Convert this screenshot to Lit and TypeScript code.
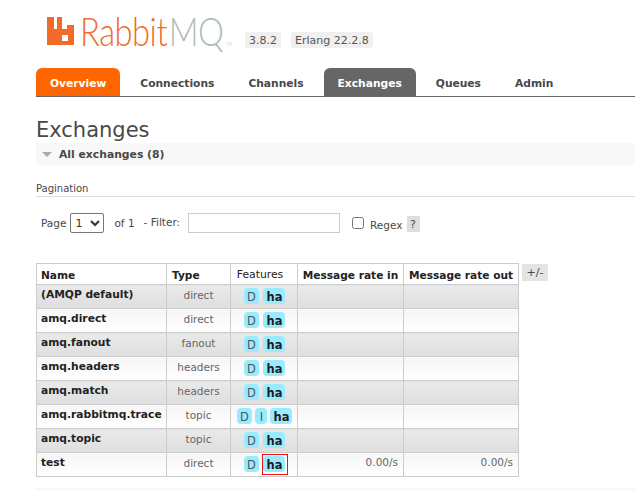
import { LitElement, html, css, svg } from "lit";
import { customElement } from "lit/decorators.js";

interface Row { name: string; type: string; feats: string[]; rateIn?: string; rateOut?: string; mark?: boolean }

const rows: Row[] = [
  { name: "(AMQP default)", type: "direct", feats: ["D", "ha"] },
  { name: "amq.direct", type: "direct", feats: ["D", "ha"] },
  { name: "amq.fanout", type: "fanout", feats: ["D", "ha"] },
  { name: "amq.headers", type: "headers", feats: ["D", "ha"] },
  { name: "amq.match", type: "headers", feats: ["D", "ha"] },
  { name: "amq.rabbitmq.trace", type: "topic", feats: ["D", "I", "ha"] },
  { name: "amq.topic", type: "topic", feats: ["D", "ha"] },
  { name: "test", type: "direct", feats: ["D", "ha"], rateIn: "0.00/s", rateOut: "0.00/s", mark: true },
];

const tabs = ["Overview", "Connections", "Channels", "Exchanges", "Queues", "Admin"];

const logoMark = svg`<svg class="mark" width="27" height="28" viewBox="0 0 27 28">
  <path fill="#f26b28" fill-rule="evenodd" d="M0 0H7V12H10V0H15V12H20V8H27V28H0ZM15 18H21V24H15Z"/>
</svg>`;

@customElement("app-root")
export class AppRoot extends LitElement {
  static styles = css`
    :host {
      display: block;
      width: 635px;
      height: 490px;
      overflow: hidden;
      background: #fff;
      font-family: "DejaVu Sans", Verdana, sans-serif;
      font-size: 10.5px;
      color: #484848;
    }
    .head { display: flex; align-items: flex-start; height: 68px; padding-left: 47px; box-sizing: border-box; }
    .logo { display: flex; align-items: flex-start; padding-top: 17px; width: 198px; flex: none; }
    .mark { flex: none; margin-right: 6px; }
    .word {
      display: block;
      font-family: Lato, "Open Sans", sans-serif;
      font-weight: 300;
      font-size: 39px;
      line-height: 28px;
      letter-spacing: -0.6px;
      color: #f26b28;
      white-space: nowrap;
      transform: scaleX(0.84);
      transform-origin: left center;
    }
    .word b { font-weight: 300; color: #aebdb8; margin-left: 2px; }
    .word sup { font-size: 5px; letter-spacing: 0; color: #aebdb8; vertical-align: baseline; margin-left: 3px; }
    .vers { display: flex; gap: 10px; padding-top: 32px; }
    .ver { background: #f0f0f0; border-radius: 3px; padding: 0 4px; height: 16px; line-height: 17px; font-size: 11px; color: #555; }
    .tabs { display: flex; gap: 6px; margin-left: 36px; border-bottom: 1px solid #666; height: 28px; }
    .tab {
      padding: 0 14px; line-height: 31px; font-weight: bold; font-size: 10.7px; color: #484848;
      border-radius: 6px 6px 0 0;
    }
    .tab.over { background: #f60; color: #fff; }
    .tab.sel { background: #666; color: #fff; }
    .main { padding-left: 36px; }
    h1 { margin: 0; font-weight: normal; font-size: 21px; line-height: 26px; padding-top: 20px; color: #484848; }
    .bar { background: #f8f8f8; height: 22px; display: flex; align-items: center; padding-left: 6px; font-weight: bold; font-size: 10.8px; }
    .tri { width: 0; height: 0; border-left: 5px solid transparent; border-right: 5px solid transparent; border-top: 5px solid #aaa; margin-right: 7px; }
    .pag { margin-top: 17px; height: 14px; line-height: 14px; font-size: 10px; border-bottom: 1px solid #ddd; color: #484848; }
    .form { display: flex; align-items: flex-start; margin-top: 15px; height: 22px; padding-left: 5px; font-size: 10.5px; }
    .form > span { line-height: 22px; }
    select { width: 34px; height: 20px; margin: 1px 10px 0 4px; font: 11px "DejaVu Sans", sans-serif; padding: 0; border: 1px solid #777; border-radius: 2px; background: #fff; color: #333; }
    .form > span.flt { margin-left: 9px; line-height: 20px; }
    input[type="text"] { width: 152px; height: 20px; box-sizing: border-box; margin: 1px 0 0 8px; border: 1px solid #ccc; padding: 0; }
    input[type="checkbox"] { width: 12px; height: 12px; margin: 5px 6px 0 12px; }
    .form > span.rx { line-height: 26px; }
    .form > span.q { background: #ddd; width: 13px; height: 16px; margin: 4px 0 0 4px; text-align: center; line-height: 17px; font-size: 11px; }
    .wrap { display: flex; align-items: flex-start; margin-top: 29px; }
    table { border-collapse: collapse; table-layout: fixed; width: 482px; flex: none; }
    th, td { border: 1px solid #ccc; padding: 0; box-sizing: border-box; }
    th { height: 21px; font-size: 10.6px; font-weight: bold; color: #222; text-align: center; padding-top: 1px; background: #fff; }
    th.fe { font-weight: normal; font-size: 10.8px; padding-right: 8px; }
    th.n, td.n { text-align: left; padding-left: 4px; }
    th.ty { text-align: left; padding-left: 5px; }
    td { height: 24px; vertical-align: top; }
    tr.odd td { background: linear-gradient(#eaeaea, #dedede); }
    tr.even td { background: linear-gradient(#f6f6f6, #fff); }
    td.n { font-weight: bold; font-size: 10.7px; color: #222; line-height: 20px; }
    td.t { text-align: center; line-height: 20px; color: #666; font-size: 10.5px; }
    td.f { padding: 3px 0 0 1px; }
    .fs { display: flex; justify-content: center; gap: 4px; }
    .fs.three { gap: 3px; }
    .b { background: #99ebff; border-radius: 4px; height: 16px; line-height: 18px; padding: 0 3.5px; font-size: 11.5px; color: #555; position: relative; min-width: 5px; text-align: center; }
    .b.ha { font-weight: bold; font-size: 11.5px; color: #222; padding: 0 3px; }
    .b.mk::after { content: ""; position: absolute; inset: -2px -3px -3px -1px; border: 1px solid #e11; }
    td.r { text-align: right; padding-right: 5px; line-height: 19px; color: #666; }
    .pm { background: #e4e4e4; margin: 1px 0 0 3px; width: 26px; height: 17px; text-align: center; line-height: 17px; font-size: 11px; }
    .foot { background: #f8f8f8; height: 3px; margin-top: 11px; }
  `;

  render() {
    return html`
      <div class="head">
        <div class="logo">${logoMark}<span class="word">Rabbit<b>MQ</b><sup>TM</sup></span></div>
        <div class="vers"><span class="ver">3.8.2</span><span class="ver">Erlang 22.2.8</span></div>
      </div>
      <div class="tabs">
        ${tabs.map((t) => html`<div class="tab ${t === "Overview" ? "over" : t === "Exchanges" ? "sel" : ""}">${t}</div>`)}
      </div>
      <div class="main">
        <h1>Exchanges</h1>
        <div class="bar"><span class="tri"></span>All exchanges (8)</div>
        <div class="pag">Pagination</div>
        <div class="form">
          <span>Page</span>
          <select><option>1</option></select>
          <span>of 1</span>
          <span class="flt">- Filter:</span>
          <input type="text" />
          <input type="checkbox" />
          <span class="rx">Regex</span>
          <span class="q">?</span>
        </div>
        <div class="wrap">
          <table>
            <colgroup>
              <col style="width:130px" /><col style="width:64px" /><col style="width:67px" /><col style="width:106px" /><col style="width:115px" />
            </colgroup>
            <thead>
              <tr><th class="n">Name</th><th class="ty">Type</th><th class="fe">Features</th><th>Message rate in</th><th>Message rate out</th></tr>
            </thead>
            <tbody>
              ${rows.map((r, i) => html`
                <tr class="${i % 2 ? "even" : "odd"}">
                  <td class="n">${r.name}</td>
                  <td class="t">${r.type}</td>
                  <td class="f"><div class="fs ${r.feats.length > 2 ? "three" : ""}">${r.feats.map((f) => html`<span class="b ${f === "ha" ? "ha" : ""} ${f === "ha" && r.mark ? "mk" : ""}">${f}</span>`)}</div></td>
                  <td class="r">${r.rateIn ?? ""}</td>
                  <td class="r">${r.rateOut ?? ""}</td>
                </tr>`)}
            </tbody>
          </table>
          <div class="pm">+/-</div>
        </div>
        <div class="foot"></div>
      </div>
    `;
  }
}
